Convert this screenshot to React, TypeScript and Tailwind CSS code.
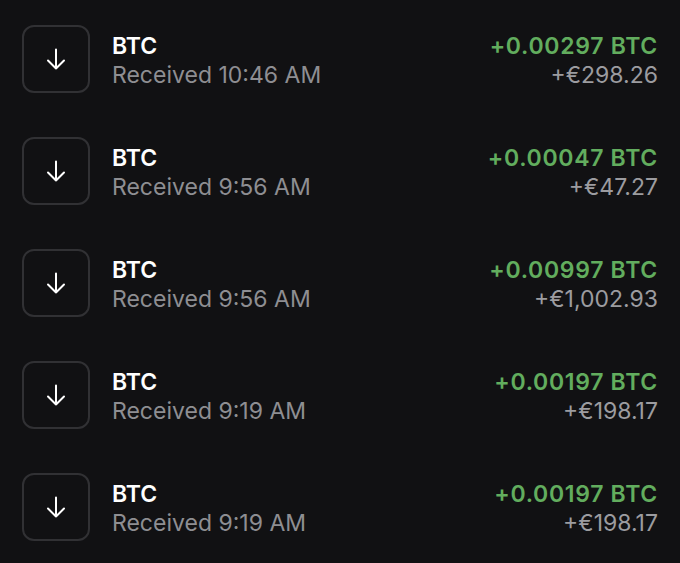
const rows = [
  { time: "10:46 AM", btc: "+0.00297 BTC", eur: "+€298.26" },
  { time: "9:56 AM", btc: "+0.00047 BTC", eur: "+€47.27" },
  { time: "9:56 AM", btc: "+0.00997 BTC", eur: "+€1,002.93" },
  { time: "9:19 AM", btc: "+0.00197 BTC", eur: "+€198.17" },
  { time: "9:19 AM", btc: "+0.00197 BTC", eur: "+€198.17" },
];

function ArrowDownIcon() {
  return (
    <svg width="20" height="22" viewBox="0 0 20 22" fill="none" aria-hidden="true">
      <path
        d="M10 1.5v19M2 12.5l8 8 8-8"
        stroke="white"
        strokeWidth="2"
        strokeLinecap="round"
        strokeLinejoin="round"
      />
    </svg>
  );
}

export default function App() {
  return (
    <div
      className="h-[563px] w-[680px] overflow-hidden bg-[#111113] px-[22px] pt-[25px]"
      style={{ fontFamily: "Inter, 'Noto Sans', sans-serif" }}
    >
      <ul className="flex flex-col gap-[44px]">
        {rows.map((row, i) => (
          <li key={i} className="flex items-center gap-[22px]">
            <div className="flex h-[68px] w-[68px] shrink-0 items-center justify-center rounded-[12px] border-2 border-[#313134]">
              <ArrowDownIcon />
            </div>
            <div className="flex-1 pt-[4px] text-[23px] leading-[29px]">
              <div className="font-semibold text-white">BTC</div>
              <div className="text-[#8e8e92]">Received {row.time}</div>
            </div>
            <div className="pt-[4px] text-right text-[23px] leading-[29px]">
              <div className="font-semibold tracking-[0.7px] text-[#62ad5e]">{row.btc}</div>
              <div className="text-[#9c9ca0]">{row.eur}</div>
            </div>
          </li>
        ))}
      </ul>
    </div>
  );
}
